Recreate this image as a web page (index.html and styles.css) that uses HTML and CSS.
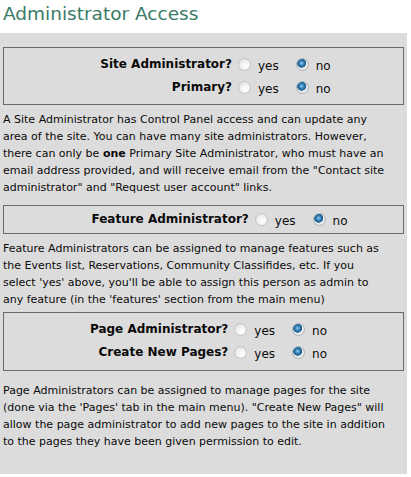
FILE: index.html
```html
<!DOCTYPE html>
<html>
<head>
<meta charset="utf-8">
<link rel="stylesheet" href="styles.css">
</head>
<body>
<h1 class="title">Administrator Access</h1>
<div class="panel">
  <div class="box box-a">
    <div class="row">
      <span class="label">Site Administrator?</span>
      <span class="choices">
        <input type="radio" class="radio" name="site"><span class="opt">yes</span>
        <input type="radio" class="radio" name="site" checked><span class="opt">no</span>
      </span>
    </div>
    <div class="row">
      <span class="label">Primary?</span>
      <span class="choices">
        <input type="radio" class="radio" name="primary"><span class="opt">yes</span>
        <input type="radio" class="radio" name="primary" checked><span class="opt">no</span>
      </span>
    </div>
  </div>
  <p class="desc">A Site Administrator has Control Panel access and can update any<br>area of the site. You can have many site administrators. However,<br>there can only be <b>one</b> Primary Site Administrator, who must have an<br>email address provided, and will receive email from the "Contact site<br>administrator" and "Request user account" links.</p>

  <div class="box box-b">
    <div class="row">
      <span class="label">Feature Administrator?</span>
      <span class="choices">
        <input type="radio" class="radio" name="feature"><span class="opt">yes</span>
        <input type="radio" class="radio" name="feature" checked><span class="opt">no</span>
      </span>
    </div>
  </div>
  <p class="desc desc-tight">Feature Administrators can be assigned to manage features such as<br>the Events list, Reservations, Community Classifides, etc. If you<br>select 'yes' above, you'll be able to assign this person as admin to<br>any feature (in the 'features' section from the main menu)</p>

  <div class="box box-c">
    <div class="row">
      <span class="label">Page Administrator?</span>
      <span class="choices">
        <input type="radio" class="radio" name="page"><span class="opt">yes</span>
        <input type="radio" class="radio" name="page" checked><span class="opt">no</span>
      </span>
    </div>
    <div class="row">
      <span class="label">Create New Pages?</span>
      <span class="choices">
        <input type="radio" class="radio" name="newpages"><span class="opt">yes</span>
        <input type="radio" class="radio" name="newpages" checked><span class="opt">no</span>
      </span>
    </div>
  </div>
  <p class="desc desc-last">Page Administrators can be assigned to manage pages for the site<br>(done via the 'Pages' tab in the main menu). "Create New Pages" will<br>allow the page administrator to add new pages to the site in addition<br>to the pages they have been given permission to edit.</p>
</div>
</body>
</html>
```
FILE: styles.css
```css
html, body {
  margin: 0;
  padding: 0;
  background: #ffffff;
}
body {
  font-family: "DejaVu Sans", Verdana, sans-serif;
  color: #0a0a0a;
}
.title {
  margin: 0 0 5px;
  padding-left: 3px;
  font-size: 18.5px;
  line-height: 28px;
  font-weight: normal;
  color: #3b7a67;
}
.panel {
  width: 407px;
  box-sizing: border-box;
  background: #dcdcdc;
  padding: 14px 3px 24px;
}
.box {
  border: 1px solid #6a6a6a;
  display: grid;
  grid-template-columns: max-content max-content;
  justify-content: center;
  padding: 5px 0 5px 24px;
}
.box-b {
  padding-top: 2px;
  padding-bottom: 2px;
  padding-left: 32px;
}
.box-c {
  padding-left: 10px;
  padding-bottom: 6px;
}
.row {
  display: contents;
}
.label {
  font-size: 12px;
  font-weight: bold;
  text-align: right;
  line-height: 23px;
  padding-right: 6px;
}
.choices {
  display: flex;
  align-items: center;
  height: 23px;
  font-size: 12px;
}
.radio {
  appearance: none;
  -webkit-appearance: none;
  margin: 0;
  width: 13px;
  height: 13px;
  border-radius: 50%;
  border: 1px solid #c4c4c4;
  background: radial-gradient(circle at 60% 65%, #ffffff 0%, #f2f2f2 45%, #d8d8d8 100%);
  box-sizing: border-box;
  flex: none;
}
.radio:checked {
  border-color: #a9b4bb;
  background:
    radial-gradient(circle at 42% 38%, #9fd0ef 0px, #3a88bd 2px, #1a5c8a 4.2px, rgba(0,0,0,0) 4.8px),
    radial-gradient(circle, #f4f4f4 0%, #e2e2e2 100%);
}
.opt {
  margin-left: 7px;
  margin-right: 17px;
  position: relative;
  top: 1px;
}
.opt:last-child {
  margin-right: 0;
}
.desc {
  margin: 6px 0 9px;
  font-size: 11px;
  line-height: 17px;
}
.desc-tight {
  margin-bottom: 4px;
}
.desc-last {
  margin-top: 11px;
  margin-bottom: 0;
}
```
